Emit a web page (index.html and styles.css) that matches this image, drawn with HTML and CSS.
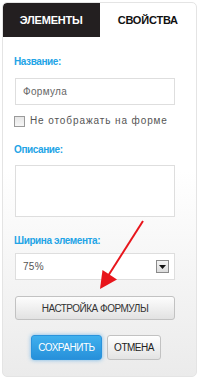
FILE: index.html
```html
<!DOCTYPE html>
<html lang="ru">
<head>
<meta charset="utf-8">
<title>Свойства</title>
<link rel="stylesheet" href="styles.css">
</head>
<body>
<div class="panel">
  <div class="tabs">
    <div class="tab active">ЭЛЕМЕНТЫ</div>
    <div class="tab">СВОЙСТВА</div>
  </div>
  <div class="content">
    <div class="label l1">Название:</div>
    <div class="field input">Формула</div>
    <div class="check-row"><span class="checkbox"></span><span class="check-label">Не отображать на форме</span></div>
    <div class="label l2">Описание:</div>
    <div class="field textarea"></div>
    <div class="label l3">Ширина элемента:</div>
    <div class="field select"><span>75%</span><span class="dd"><svg width="7" height="4" viewBox="0 0 7 4"><path d="M0 0H7L3.5 4Z" fill="#111"/></svg></span></div>
    <div class="btn formula">НАСТРОЙКА ФОРМУЛЫ</div>
    <div class="actions">
      <div class="btn save">СОХРАНИТЬ</div>
      <div class="btn cancel">ОТМЕНА</div>
    </div>
  </div>
  <svg class="arrow" width="200" height="383" viewBox="0 0 200 383">
    <line x1="143" y1="221" x2="108" y2="276" stroke="#e8151b" stroke-width="2"/>
    <path d="M100 289 L102.5 270 L117 279.5 Z" fill="#e8151b"/>
  </svg>
</div>
</body>
</html>
```
FILE: styles.css
```css
html, body { margin: 0; padding: 0; background: #fff; }
body { font-family: "Liberation Sans", Arial, sans-serif; }
.panel {
  position: relative;
  margin: 2px 0 0 2px;
  width: 195px;
  height: 375px;
  box-sizing: border-box;
  border: 1px solid #e4e4e4;
  border-radius: 5px;
  background: linear-gradient(#fff 0%, #fff 45%, #ebebeb 100%);
  overflow: hidden;
}
.tabs { display: flex; height: 34px; }
.tab {
  flex: 1;
  display: flex;
  align-items: center;
  justify-content: center;
  font-size: 11px;
  font-weight: bold;
  color: #111;
  letter-spacing: -0.2px;
}
.tab.active { background: #231f20; color: #fff; border-top-left-radius: 4px; }
.content { padding: 0 0 0 11px; }
.label {
  font-size: 10px;
  font-weight: bold;
  line-height: 12px;
  height: 12px;
  color: #23a4e6;
  letter-spacing: -0.4px;
}
.l1 { margin-top: 19px; }
.l2 { margin-top: 17px; }
.l3 { margin-top: 18px; }
.field {
  box-sizing: border-box;
  margin-left: 1px;
  width: 160px;
  border: 1px solid #dedede;
  background: #fff;
  font-size: 10px;
  color: #666;
  letter-spacing: 0.3px;
}
.input { margin-top: 10px; height: 27px; line-height: 25px; padding-left: 7px; }
.check-row { margin-top: 10px; height: 12px; display: flex; align-items: center; gap: 5px; }
.checkbox {
  width: 11px; height: 11px; box-sizing: border-box;
  border: 1px solid #9a9a9a;
  background: linear-gradient(#e6e6e6, #f6f6f6);
}
.check-label { font-size: 10px; color: #555; line-height: 12px; letter-spacing: 0.9px; }
.textarea { margin-top: 9px; height: 52px; }
.select {
  margin-top: 6px; height: 27px; padding: 0 5px 0 7px;
  display: flex; align-items: center; justify-content: space-between;
  color: #555;
}
.dd {
  width: 13px; height: 13px; box-sizing: border-box;
  border: 1px solid #8a8a8a;
  background: linear-gradient(#f4f4f4, #dcdcdc);
  display: flex; align-items: center; justify-content: center;
}
.dd svg { display: block; }
.btn {
  box-sizing: border-box;
  display: flex; align-items: center; justify-content: center;
  font-size: 10px;
  border-radius: 3px;
  letter-spacing: -0.5px;
}
.formula {
  margin: 16px 0 0 1px; width: 160px; height: 24px;
  border: 1px solid #c2c2c2;
  background: linear-gradient(#fdfdfd, #e2e2e2);
  color: #333;
}
.actions { display: flex; gap: 5px; margin: 15px 0 0 17px; }
.save {
  width: 71px; height: 25px;
  background: linear-gradient(#3fb0ee, #2790da);
  border: 1px solid #2a93dc;
  color: #fff;
  box-shadow: 0 0 4px rgba(40, 150, 230, 0.6);
}
.cancel {
  width: 54px; height: 25px;
  border: 1px solid #c2c2c2;
  background: linear-gradient(#fff, #e3e3e3);
  color: #222;
}
.arrow { position: absolute; left: -3px; top: -3px; pointer-events: none; }
```
